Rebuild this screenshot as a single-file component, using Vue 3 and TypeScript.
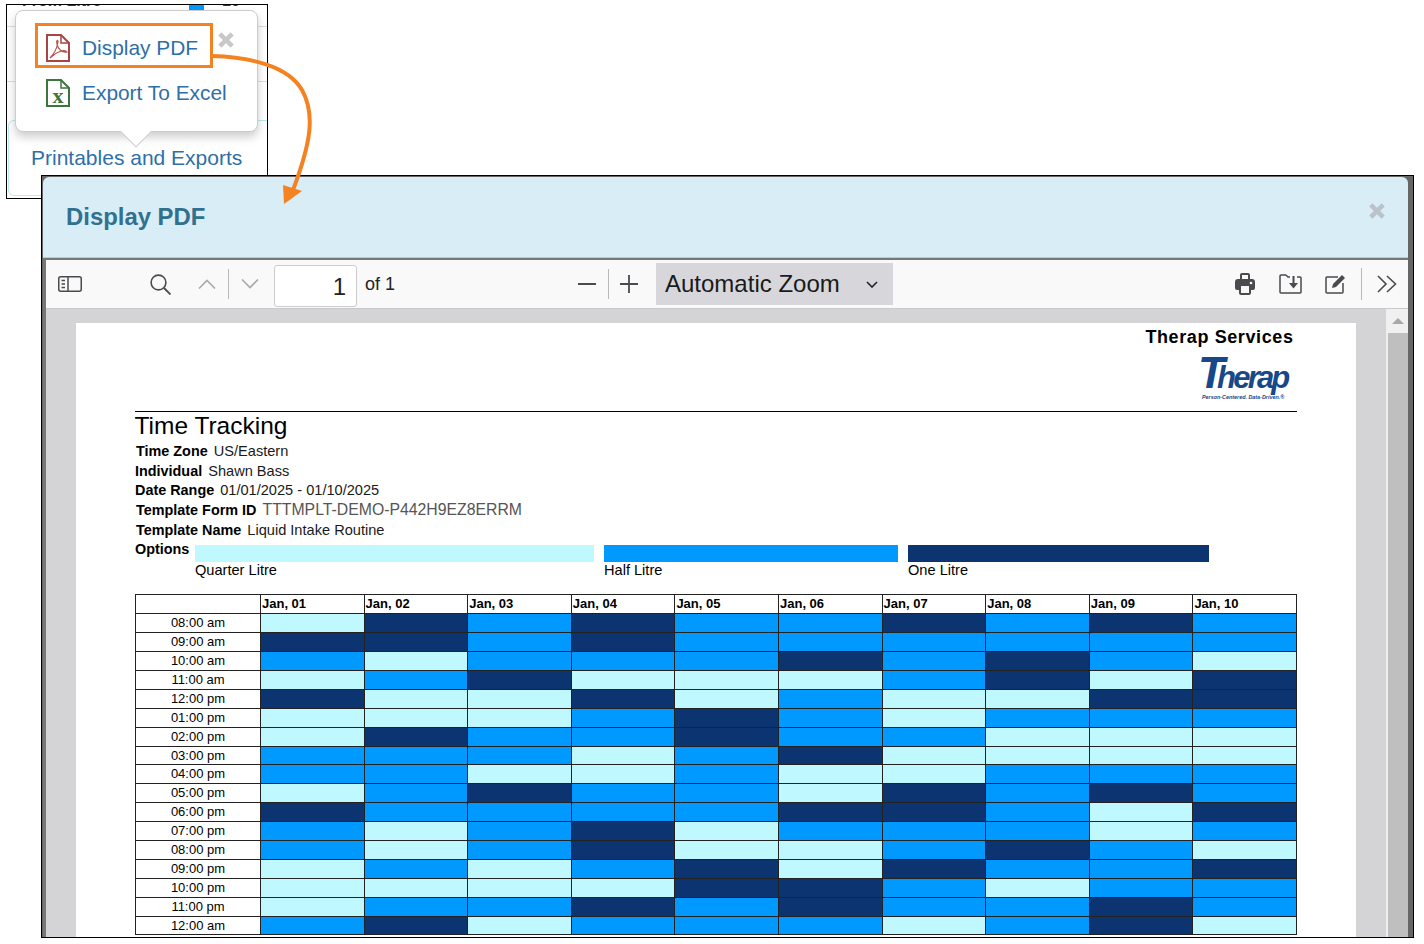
<script setup lang="ts">
const days: string[] = ['Jan, 01', 'Jan, 02', 'Jan, 03', 'Jan, 04', 'Jan, 05', 'Jan, 06', 'Jan, 07', 'Jan, 08', 'Jan, 09', 'Jan, 10']
const rows: { time: string; cells: string }[] = [
  { time: '08:00 am', cells: 'ldmdmmdmdm' },
  { time: '09:00 am', cells: 'ddmdmmmmmm' },
  { time: '10:00 am', cells: 'mlmmmdmdml' },
  { time: '11:00 am', cells: 'lmdlllmdld' },
  { time: '12:00 pm', cells: 'dlldlmlldd' },
  { time: '01:00 pm', cells: 'lllmdmlmmm' },
  { time: '02:00 pm', cells: 'ldmmdmmlll' },
  { time: '03:00 pm', cells: 'mmmlmdllll' },
  { time: '04:00 pm', cells: 'mmllmllmmm' },
  { time: '05:00 pm', cells: 'lmdmmldmdm' },
  { time: '06:00 pm', cells: 'dmmmmddmld' },
  { time: '07:00 pm', cells: 'mlmdlmmmlm' },
  { time: '08:00 pm', cells: 'mlmdllmdml' },
  { time: '09:00 pm', cells: 'lmlmdldmmd' },
  { time: '10:00 pm', cells: 'llllddmlmm' },
  { time: '11:00 pm', cells: 'lmmdmdmmdm' },
  { time: '12:00 am', cells: 'mdlmmmlmdl' },
]
const meta: { label: string; value: string; cls: string }[] = [
  { label: 'Time Zone', value: 'US/Eastern', cls: 'in1' },
  { label: 'Individual', value: 'Shawn Bass', cls: '' },
  { label: 'Date Range', value: '01/01/2025 - 01/10/2025', cls: '' },
  { label: 'Template Form ID', value: 'TTTMPLT-DEMO-P442H9EZ8ERRM', cls: 'in1 big' },
  { label: 'Template Name', value: 'Liquid Intake Routine', cls: 'in1' },
]
</script>

<template>
  <div class="canvas">
    <!-- screenshot behind -->
    <div class="back">
      <div class="back-top">
        <span class="cut">From Litre</span>
        <span class="cut-box"></span>
        <span class="cut cut-r">10</span>
      </div>
      <div class="back-line l1"></div>
      <div class="back-line l2"></div>
      <div class="back-card">
        <a class="back-link">Printables and Exports</a>
      </div>
    </div>

    <!-- popover -->
    <div class="pop">
      <div class="pop-item first">
        <svg class="file" viewBox="0 0 24 28" width="24" height="28">
          <path d="M1 1H15L23 9V27H1Z" fill="#fff" stroke="#a94442" stroke-width="2" />
          <path d="M15 1V9H23" fill="none" stroke="#a94442" stroke-width="1.5" />
          <path d="M4 24C8 20 11 14 12 8C12 5 10 6 11 10C12 15 16 19 21 18C19 15 11 17 4 24Z" fill="none" stroke="#b5524a" stroke-width="1.2" />
        </svg>
        <span>Display PDF</span>
      </div>
      <div class="pop-item second">
        <svg class="file" viewBox="0 0 24 28" width="24" height="28">
          <path d="M1 1H15L23 9V27H1Z" fill="#fff" stroke="#3c763d" stroke-width="2" />
          <path d="M15 1V9H23" fill="none" stroke="#3c763d" stroke-width="1.5" />
          <text x="12" y="24" text-anchor="middle" class="xl">x</text>
        </svg>
        <span>Export To Excel</span>
      </div>
      <svg class="pop-close" viewBox="0 0 16 16" width="18" height="18">
        <path d="M2.5 2.5L13.5 13.5M13.5 2.5L2.5 13.5" stroke="#c8c8c8" stroke-width="4" />
      </svg>
      <div class="pop-tip"></div>
    </div>

    <!-- modal window -->
    <div class="modal">
      <div class="modal-head">
        <h2>Display PDF</h2>
        <svg class="modal-close" viewBox="0 0 16 16" width="18" height="18">
          <path d="M2.5 2.5L13.5 13.5M13.5 2.5L2.5 13.5" stroke="#b9c3c8" stroke-width="4" />
        </svg>
      </div>
      <div class="modal-body">
        <div class="toolbar">
          <svg class="t-side" viewBox="0 0 24 16" width="24" height="16">
            <rect x="0.75" y="0.75" width="22.5" height="14.5" rx="2" fill="none" stroke="#4a4a4f" stroke-width="1.5" />
            <path d="M10 1V15" stroke="#4a4a4f" stroke-width="1.5" />
            <path d="M3.5 4.5H7M3.5 8H7M3.5 11.5H7" stroke="#4a4a4f" stroke-width="1.5" />
          </svg>
          <svg class="t-search" viewBox="0 0 21 21" width="21" height="21">
            <circle cx="8.5" cy="8.5" r="7.4" fill="none" stroke="#4a4a4f" stroke-width="1.6" />
            <path d="M14 14L20.5 20.5" stroke="#4a4a4f" stroke-width="1.8" />
          </svg>
          <svg class="t-up" viewBox="0 0 18 10" width="18" height="10">
            <path d="M1 9.5L9 1.5L17 9.5" fill="none" stroke="#aaaaad" stroke-width="1.6" />
          </svg>
          <div class="sep s1"></div>
          <svg class="t-down" viewBox="0 0 18 10" width="18" height="10">
            <path d="M1 .5L9 8.5L17 .5" fill="none" stroke="#aaaaad" stroke-width="1.6" />
          </svg>
          <div class="page-input">1</div>
          <span class="of">of 1</span>
          <svg class="t-minus" viewBox="0 0 18 2" width="18" height="2"><path d="M0 1H18" stroke="#4a4a4f" stroke-width="2" /></svg>
          <div class="sep s2"></div>
          <svg class="t-plus" viewBox="0 0 18 18" width="18" height="18"><path d="M0 9H18M9 0V18" stroke="#4a4a4f" stroke-width="1.8" /></svg>
          <div class="zoom-sel">
            <span>Automatic Zoom</span>
            <svg viewBox="0 0 12 7" width="12" height="7"><path d="M1 1L6 6L11 1" fill="none" stroke="#222" stroke-width="1.6" /></svg>
          </div>
          <svg class="t-print" viewBox="0 0 20 22" width="20" height="22">
            <path d="M5 6V2Q5 0 7 0H13Q15 0 15 2V6H17Q20 6 20 9V15Q20 17 18 17H16V20Q16 22 14 22H6Q4 22 4 20V17H2Q0 17 0 15V9Q0 6 3 6Z" fill="#4a4a4f" />
            <rect x="7" y="2" width="6" height="4" fill="#f9f9fa" />
            <rect x="6" y="13" width="8" height="7" fill="#f9f9fa" />
            <circle cx="16" cy="10" r="1.3" fill="#f9f9fa" />
          </svg>
          <svg class="t-save" viewBox="0 0 23 20" width="23" height="20">
            <path d="M7 1H2Q1 1 1 2V18Q1 19 2 19H21Q22 19 22 18V4Q22 3 21 3H18M11 3H9L7 1" fill="none" stroke="#4a4a4f" stroke-width="1.5" />
            <path d="M15.5 2V9H19L14.5 14.5L10 9H13.5V2Z" fill="#4a4a4f" />
          </svg>
          <svg class="t-edit" viewBox="0 0 21 20" width="21" height="20">
            <path d="M13 3H2Q1 3 1 4V18Q1 19 2 19H17Q18 19 18 18V9" fill="none" stroke="#4a4a4f" stroke-width="1.5" />
            <path d="M7 14L8 10L17 1L20 4L11 13Z" fill="#4a4a4f" />
          </svg>
          <div class="sep s3"></div>
          <svg class="t-more" viewBox="0 0 20 18" width="20" height="18">
            <path d="M1 1L9 9L1 17M10 1L18.5 9L10 17" fill="none" stroke="#4a4a4f" stroke-width="1.6" />
          </svg>
        </div>
        <div class="viewer">
          <div class="viewer-area">
            <div class="page">
              <div class="company">Therap Services</div>
              <div class="logo-row">
                <div class="logo">
                  <div class="logo-word"><span class="logo-t">T</span>herap</div>
                  <div class="logo-tag">Person-Centered. Data-Driven.®</div>
                </div>
              </div>
              <div class="title">Time Tracking</div>
              <div v-for="m in meta" :key="m.label" class="meta" :class="m.cls">
                <b>{{ m.label }}</b><span>{{ m.value }}</span>
              </div>
              <div class="opts">
                <b>Options</b>
                <div class="opt o1"><i class="sw l"></i><span>Quarter Litre</span></div>
                <div class="opt o2"><i class="sw m"></i><span>Half Litre</span></div>
                <div class="opt o3"><i class="sw d"></i><span>One Litre</span></div>
              </div>
              <div class="grid">
                <div class="g-corner"></div>
                <div v-for="d in days" :key="d" class="g-day">{{ d }}</div>
                <template v-for="r in rows" :key="r.time">
                  <div class="g-time">{{ r.time }}</div>
                  <div v-for="(c, i) in r.cells.split('')" :key="i" :class="c"></div>
                </template>
              </div>
            </div>
          </div>
          <div class="scroll">
            <div class="scroll-btn"><i></i></div>
            <div class="scroll-thumb"></div>
          </div>
        </div>
      </div>
    </div>

    <!-- callout arrow -->
    <svg class="callout" viewBox="0 0 1424 944" width="1424" height="944">
      <path d="M212 56C250 57 288 66 302 90C316 115 310 145 293 190" fill="none" stroke="#f58220" stroke-width="4" />
      <path d="M284 204L283 185L302 191Z" fill="#f58220" />
    </svg>
  </div>
</template>

<style scoped>
.canvas {
  position: relative;
  width: 1424px;
  height: 944px;
  overflow: hidden;
  background: #fff;
  font-family: "Liberation Sans", Arial, sans-serif;
  color: #000;
}
.back {
  position: absolute;
  left: 6px;
  top: 4px;
  width: 260px;
  height: 193px;
  border: 1px solid #000;
  overflow: hidden;
  background: #fff;
}
.back-top {
  display: flex;
  align-items: flex-start;
  height: 21px;
  font-size: 16px;
  color: #333;
}
.cut {
  margin: -13px 0 0 15px;
  width: 167px;
  font-weight: bold;
}
.cut-box {
  width: 15px;
  height: 6px;
  background: #0099ff;
}
.cut-r {
  margin-left: 18px;
  width: 30px;
}
.back-line {
  height: 1px;
  background: #ddd;
}
.l2 {
  margin-top: 54px;
}
.back-card {
  margin: 38px 0 0 1px;
  width: 272px;
  height: 76px;
  box-sizing: border-box;
  border: 1px solid #bce8f1;
  border-radius: 6px;
  padding: 25px 0 0 22px;
}
.back-link {
  font-size: 21px;
  line-height: 24px;
  color: #2f6fa8;
}
.pop {
  position: absolute;
  left: 15px;
  top: 10px;
  width: 243px;
  height: 122px;
  box-sizing: border-box;
  border: 1px solid #ccc;
  border-radius: 8px;
  background: #fff;
  box-shadow: 0 5px 10px rgba(0, 0, 0, 0.2);
  padding: 12px 0 0 19px;
}
.pop-item {
  display: flex;
  align-items: center;
  gap: 12px;
  font-size: 20.9px;
  color: #2f6fa8;
  box-sizing: border-box;
}
.pop-item.first {
  width: 178px;
  height: 45px;
  border: 3px solid #f58220;
  padding: 5px 0 0 8px;
}
.pop-item.second {
  height: 30px;
  margin-top: 10px;
  padding-left: 11px;
}
.xl {
  font-family: "Liberation Serif", serif;
  font-weight: bold;
  font-size: 22px;
  fill: #3c763d;
}
.pop-close {
  position: absolute;
  left: 201px;
  top: 20px;
}
.pop-tip {
  position: absolute;
  left: 109px;
  top: 110px;
  width: 21px;
  height: 21px;
  background: #fff;
  border-right: 1px solid #ccc;
  border-bottom: 1px solid #ccc;
  transform: rotate(45deg);
}
.modal {
  position: absolute;
  left: 41px;
  top: 175px;
  width: 1365px;
  height: 760px;
  border: 1px solid #000;
  background: #666;
  padding: 1px 5px 0 1px;
  overflow: hidden;
  display: flex;
  flex-direction: column;
}
.modal-head {
  flex: none;
  height: 81px;
  background: #d9edf7;
  border-radius: 6px 6px 0 0;
  border-bottom: 1px solid #a9d3dc;
  box-sizing: border-box;
  display: flex;
  align-items: center;
  justify-content: space-between;
  padding: 0 22px 0 23px;
}
.modal-head h2 {
  margin: 0;
  font-size: 23.9px;
  font-weight: bold;
  color: #31708f;
}
.modal-close {
  margin-bottom: 12px;
}
.modal-body {
  flex: 1;
  min-height: 0;
  background: #777;
  padding: 2px 0 0 3px;
  display: flex;
  flex-direction: column;
}
.toolbar {
  flex: none;
  height: 49px;
  box-sizing: border-box;
  background: #f9f9fa;
  border-bottom: 1px solid #c9c9cc;
  display: flex;
  align-items: center;
  padding-left: 12px;
  font-size: 18px;
  color: #222;
}
.t-search { margin-left: 68px; }
.t-up { margin-left: 27px; }
.sep {
  width: 1px;
  height: 30px;
  background: #b8b8bb;
}
.s1 { margin-left: 12px; }
.t-down { margin-left: 12px; }
.page-input {
  margin: 4px 0 0 15px;
  width: 83px;
  height: 42px;
  box-sizing: border-box;
  background: #fff;
  border: 1px solid #ccc;
  border-radius: 3px;
  text-align: right;
  font-size: 24px;
  line-height: 42px;
  padding-right: 10px;
}
.of {
  margin-left: 8px;
  width: 29px;
  white-space: nowrap;
}
.t-minus { margin-left: 184px; }
.s2 { margin-left: 12px; }
.t-plus { margin-left: 11px; }
.zoom-sel {
  margin-left: 18px;
  width: 237px;
  height: 42px;
  box-sizing: border-box;
  background: #d7d7db;
  display: flex;
  align-items: center;
  padding: 0 15px 0 9px;
  justify-content: space-between;
  font-size: 24px;
  color: #1a1a1a;
}
.t-print { margin-left: 342px; }
.t-save { margin-left: 24px; }
.t-edit { margin-left: 23px; }
.s3 { margin-left: 15px; height: 32px; }
.t-more { margin-left: 15px; }
.viewer {
  flex: 1;
  min-height: 0;
  display: flex;
}
.viewer-area {
  flex: none;
  width: 1340px;
  background: #d4d4d7;
  padding: 14px 0 0 30px;
  box-sizing: border-box;
  overflow: hidden;
}
.page {
  width: 1280px;
  height: 640px;
  background: #fff;
  box-sizing: border-box;
  padding: 0 59px;
}
.company {
  height: 28px;
  line-height: 29px;
  text-align: right;
  padding-right: 3.5px;
  font-size: 18px;
  font-weight: bold;
  letter-spacing: 0.6px;
}
.logo-row {
  height: 61px;
  box-sizing: border-box;
  border-bottom: 1px solid #000;
  display: flex;
  justify-content: flex-end;
  padding-right: 3px;
}
.logo {
  width: 96px;
  height: 54px;
  padding-top: 1px;
  box-sizing: border-box;
  color: #16488a;
  font-style: italic;
  font-weight: bold;
}
.logo-word {
  height: 41px;
  font-size: 31px;
  line-height: 41px;
  letter-spacing: -2.8px;
  white-space: nowrap;
}
.logo-t {
  font-size: 44px;
  margin-right: -5px;
}
.logo-tag {
  font-size: 5.4px;
  line-height: 7px;
  padding: 1px 0 0 4px;
  white-space: nowrap;
}
.title {
  height: 29px;
  line-height: 27px;
  font-size: 24.5px;
  margin-left: -0.5px;
}
.meta {
  height: 19.7px;
  line-height: 20px;
  font-size: 14.6px;
  display: flex;
  gap: 6px;
  color: #1a1a1a;
}
.meta b {
  color: #000;
  font-size: 14.4px;
}
.in1 { padding-left: 1px; }
.big span {
  font-size: 15.8px;
  color: #555;
}
.opts {
  display: flex;
  font-size: 14.6px;
  line-height: 20px;
  height: 55px;
}
.opts b {
  width: 60px;
  flex: none;
  font-size: 14.4px;
}
.opt {
  display: flex;
  flex-direction: column;
  padding-top: 6px;
  line-height: 16px;
  margin-right: 10px;
}
.o1 { width: 399px; }
.o2 { width: 294px; }
.o3 { width: 301px; }
.sw {
  display: block;
  height: 17px;
}
.grid {
  display: grid;
  grid-template-columns: 124px repeat(10, 1fr);
  grid-auto-rows: 17.9px;
  gap: 1px;
  padding: 1px;
  width: 1162px;
  box-sizing: border-box;
  background: #222;
  font-size: 13px;
  line-height: 18px;
}
.g-corner, .g-day, .g-time {
  background: #fff;
}
.g-day {
  font-weight: bold;
  padding-left: 1px;
}
.g-time {
  text-align: center;
}
.l { background: #bff8ff; }
.m { background: #0099ff; }
.d { background: #0c3470; }
.scroll {
  margin-left: 2px;
  width: 20px;
  flex: none;
  background: #bfbfbf;
  box-shadow: -2px 0 0 #efefef;
}
.scroll-btn {
  height: 24px;
  background: #f0f0f0;
  display: flex;
  justify-content: center;
  padding-top: 9px;
  box-sizing: border-box;
}
.scroll-btn i {
  display: block;
  width: 0;
  height: 0;
  border-left: 6px solid transparent;
  border-right: 6px solid transparent;
  border-bottom: 6px solid #a8a8a8;
}
.callout {
  position: absolute;
  left: 0;
  top: 0;
  pointer-events: none;
}
</style>
